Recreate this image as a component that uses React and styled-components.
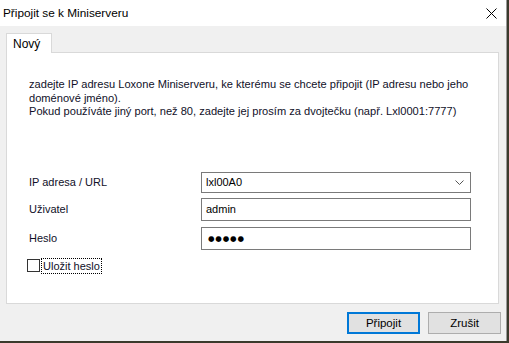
import React from "react";
import styled, { createGlobalStyle } from "styled-components";

const Global = createGlobalStyle`
  html, body { margin: 0; padding: 0; }
  body {
    background: #3b3a2c;
    width: 509px;
    height: 343px;
    overflow: hidden;
    font-family: "Liberation Sans", Arial, sans-serif;
    font-size: 11px;
    color: #000;
  }
`;

const Window = styled.div`
  width: 506px;
  height: 341px;
  background: #f0f0f0;
  border-right: 1px solid #9a9a9a;
  display: flex;
  flex-direction: column;
`;

const TitleBar = styled.div`
  height: 26px;
  background: #fff;
  display: flex;
  align-items: center;
  justify-content: space-between;
  padding: 0 9px 0 3px;
`;

const Title = styled.span`
  font-size: 11.8px;
  color: #000;
  margin-top: -1px;
`;

const CloseIcon = () => (
  <svg width="11" height="11" viewBox="0 0 11 11">
    <path d="M0.5 0.5 L10.5 10.5 M10.5 0.5 L0.5 10.5" stroke="#000" strokeWidth="1" fill="none" />
  </svg>
);

const Body = styled.div`
  flex: 1;
  display: flex;
  flex-direction: column;
  padding: 7px 7px 0 6px;
`;

const TabStrip = styled.div`
  display: flex;
  height: 19px;
`;

const Tab = styled.div`
  width: 46px;
  height: 20px;
  box-sizing: border-box;
  background: #fff;
  border: 1px solid #d9d9d9;
  border-bottom: none;
  padding: 3px 0 0 6px;
  font-size: 12px;
  position: relative;
  z-index: 1;
`;

const Panel = styled.div`
  height: 252px;
  box-sizing: border-box;
  background: #fff;
  border: 1px solid #d9d9d9;
  padding: 25px 20px 0 22px;
  display: flex;
  flex-direction: column;
`;

const Intro = styled.p`
  margin: 0;
  font-size: 11.1px;
  line-height: 13.5px;
  white-space: nowrap;
  color: #101028;
`;

const Form = styled.div`
  margin-top: 53px;
  display: grid;
  grid-template-columns: 172px 270px;
  row-gap: 5px;
  align-items: center;
`;

const Label = styled.span`
  color: #101028;
`;

const Field = styled.div`
  height: ${(p) => p.$h}px;
  box-sizing: border-box;
  border: 1px solid #7a7a7a;
  background: #fff;
  display: flex;
  align-items: center;
  justify-content: space-between;
  padding: 0 6px 0 4px;
  color: #000;
  margin-top: ${(p) => p.$mt || 0}px;
`;

const Dots = styled.span`
  font-family: "DejaVu Sans", sans-serif;
  font-size: 7.5px;
  letter-spacing: 0.8px;
  margin-left: 2px;
`;

const Chevron = () => (
  <svg width="9" height="5" viewBox="0 0 9 5">
    <path d="M0.5 0.5 L4.5 4.5 L8.5 0.5" stroke="#555" strokeWidth="1" fill="none" />
  </svg>
);

const CheckRow = styled.label`
  display: flex;
  align-items: center;
  margin: 9px 0 0 -2px;
  gap: 2px;
`;

const Box = styled.span`
  width: 13px;
  height: 13px;
  box-sizing: border-box;
  border: 1px solid #333;
  background: #fff;
`;

const CheckText = styled.span`
  outline: 1px dotted #000;
  outline-offset: 0;
  padding: 1px 1px;
  color: #101028;
`;

const Buttons = styled.div`
  display: flex;
  justify-content: flex-end;
  gap: 8px;
  margin: 8px -2px 0 0;
`;

const Button = styled.button`
  width: 73px;
  height: 22px;
  box-sizing: border-box;
  background: #e1e1e1;
  border: ${(p) => (p.$primary ? "2px solid #0078d7" : "1px solid #adadad")};
  font-family: "Liberation Sans", Arial, sans-serif;
  font-size: 11.5px;
  color: #000;
  padding: 0;
`;

export default function App() {
  return (
    <>
      <Global />
      <Window>
        <TitleBar>
          <Title>Připojit se k Miniserveru</Title>
          <CloseIcon />
        </TitleBar>
        <Body>
          <TabStrip>
            <Tab>Nový</Tab>
          </TabStrip>
          <Panel>
            <Intro>
              zadejte IP adresu Loxone Miniserveru, ke kterému se chcete připojit (IP adresu nebo jeho
              <br />
              doménové jméno).
              <br />
              Pokud používáte jiný port, než 80, zadejte jej prosím za dvojtečku (např. Lxl0001:7777)
            </Intro>
            <Form>
              <Label>IP adresa / URL</Label>
              <Field $h={21}>
                <span>lxl00A0</span>
                <Chevron />
              </Field>
              <Label>Uživatel</Label>
              <Field $h={23}>admin</Field>
              <Label>Heslo</Label>
              <Field $h={23} $mt={1}>
                <Dots>●●●●●</Dots>
              </Field>
            </Form>
            <CheckRow>
              <Box />
              <CheckText>Uložit heslo</CheckText>
            </CheckRow>
          </Panel>
          <Buttons>
            <Button $primary>Připojit</Button>
            <Button>Zrušit</Button>
          </Buttons>
        </Body>
      </Window>
    </>
  );
}
